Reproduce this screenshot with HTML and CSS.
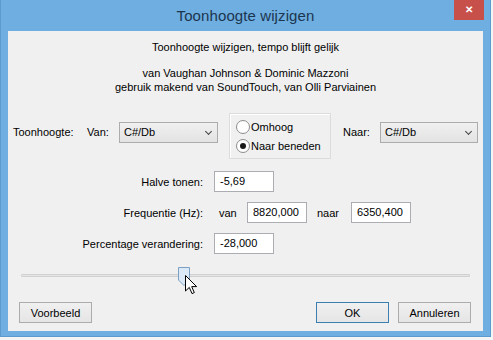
FILE: index.html
```html
<!DOCTYPE html>
<html>
<head>
    <title>Toonhoogte wijzigen</title>
    <link rel="stylesheet" href="styles.css">
</head>
<body>
    <div class="window">
        <div class="titlebar">
            <span></span>
            <span class="title">Toonhoogte wijzigen</span>
            <span class="close">&#x2715;</span>
        </div>

        <div class="client">
            <p class="intro">Toonhoogte wijzigen, tempo blijft gelijk</p>
            <p class="credits">van Vaughan Johnson &amp; Dominic Mazzoni<br>gebruik makend van SoundTouch, van Olli Parviainen</p>

            <div class="pitchrow">
                <span class="lab lab-pitch">Toonhoogte:</span>
                <span class="lab lab-van">Van:</span>
                <div class="dropdown">C#/Db<span class="chev"></span></div>
                <div class="radiobox">
                    <label class="radio"><span class="dot"></span>Omhoog</label>
                    <label class="radio"><span class="dot checked"></span>Naar beneden</label>
                </div>
                <span class="lab lab-naar">Naar:</span>
                <div class="dropdown dropdown-right">C#/Db<span class="chev"></span></div>
            </div>

            <div class="fields">
                <span class="flabel">Halve tonen:</span>
                <div class="fvalue"><div class="textbox">-5,69</div></div>

                <span class="flabel">Frequentie (Hz):</span>
                <div class="fvalue">
                    <span class="word word-van">van</span>
                    <div class="textbox">8820,000</div>
                    <span class="word word-naar">naar</span>
                    <div class="textbox">6350,400</div>
                </div>

                <span class="flabel">Percentage verandering:</span>
                <div class="fvalue"><div class="textbox">-28,000</div></div>
            </div>

            <div class="slider">
                <div class="track"></div>
                <div class="thumb">
                    <svg width="12" height="19" viewBox="0 0 12 19">
                        <path d="M0.5 0.5 H11.5 V13 L6 18.5 L0.5 13 Z" fill="#dbe9f6" stroke="#7c9fc4"/>
                    </svg>
                </div>
            </div>

            <div class="buttons">
                <button class="btn">Voorbeeld</button>
                <span class="spacer"></span>
                <button class="btn btn-default">OK</button>
                <button class="btn">Annuleren</button>
            </div>
        </div>

        <svg class="cursor" width="13" height="20" viewBox="0 0 13 20">
            <path d="M0.5 0.5 V16 L4.3 12.4 L7 18.6 L9.3 17.6 L6.7 11.6 L11.6 11.6 Z" fill="#ffffff" stroke="#000000" stroke-linejoin="round"/>
        </svg>
    </div>
</body>
</html>
```

FILE: styles.css
```css
body {
    margin: 0;
    padding: 0;
    background-color: #f4f4f4;
    font-family: "Liberation Sans", Arial, sans-serif;
    font-size: 11px;
    color: #000000;
}

.window {
    position: relative;
    width: 491px;
    height: 337px;
    background-color: #6eaee0;
    border: 1px solid #5c9bd0;
    border-top: none;
    box-sizing: border-box;
    display: flex;
    flex-direction: column;
    padding: 0 7px 5px 7px;
}

.titlebar {
    height: 31px;
    display: grid;
    grid-template-columns: 1fr auto 1fr;
    align-items: start;
}

.title {
    font-size: 15px;
    color: #1c3650;
    margin-top: 7px;
    letter-spacing: 0.1px;
}

.close {
    justify-self: end;
    width: 30px;
    height: 20px;
    margin-right: -1px;
    background-color: #c7504b;
    color: #ffffff;
    font-size: 10px;
    font-weight: bold;
    text-align: center;
    line-height: 20px;
}

.client {
    flex: 1;
    background-color: #f0f0f0;
    padding: 9px 0 0 0;
}

p {
    margin: 0;
    text-align: center;
    line-height: 14px;
}

.credits {
    margin-top: 12px;
}

.pitchrow {
    display: flex;
    align-items: flex-start;
    margin-top: 19px;
    padding-left: 5px;
}

.lab {
    margin-top: 9px;
    line-height: 21px;
}

.lab-pitch {
    width: 74px;
}

.lab-van {
    width: 32px;
}

.lab-naar {
    width: 37px;
    margin-left: 12px;
}

.dropdown {
    position: relative;
    margin-top: 9px;
    width: 99px;
    height: 21px;
    box-sizing: border-box;
    border: 1px solid #acacac;
    background: linear-gradient(#f0f0f0, #e3e3e3);
    line-height: 19px;
    padding-left: 4px;
}

.dropdown-right {
    width: 98px;
}

.chev {
    position: absolute;
    right: 6px;
    top: 6px;
    width: 4px;
    height: 4px;
    border-right: 1.5px solid #444444;
    border-bottom: 1.5px solid #444444;
    transform: rotate(45deg);
}

.radiobox {
    margin-left: 11px;
    width: 102px;
    height: 46px;
    box-sizing: border-box;
    border: 1px solid #dcdcdc;
    box-shadow: inset 1px 1px 0 #ffffff;
    padding: 6px 0 0 6px;
    display: flex;
    flex-direction: column;
    gap: 5px;
}

.radio {
    display: flex;
    align-items: center;
    line-height: 14px;
}

.dot {
    width: 12px;
    height: 12px;
    border: 1px solid #8c8c8c;
    border-radius: 50%;
    background-color: #ffffff;
    margin-right: 1px;
    display: flex;
    align-items: center;
    justify-content: center;
}

.dot.checked::after {
    content: "";
    width: 6px;
    height: 6px;
    border-radius: 50%;
    background-color: #1a1a1a;
}

.fields {
    display: grid;
    grid-template-columns: 195px auto;
    column-gap: 11px;
    row-gap: 10px;
    margin-top: 12px;
    align-items: center;
}

.flabel {
    text-align: right;
}

.fvalue {
    display: flex;
    align-items: center;
}

.textbox {
    width: 60px;
    height: 21px;
    box-sizing: border-box;
    border: 1px solid #acadb3;
    background-color: #ffffff;
    line-height: 19px;
    padding-left: 5px;
}

.word-van {
    margin-left: 5px;
    width: 28px;
}

.word-naar {
    margin-left: 10px;
    width: 34px;
}

.slider {
    position: relative;
    margin: 13px 13px 0 13px;
    height: 19px;
}

.track {
    position: absolute;
    left: 0;
    right: 0;
    top: 7px;
    height: 3px;
    background-color: #e6e6e6;
    border: 1px solid #d0d0d0;
    box-sizing: border-box;
    border-radius: 1px;
}

.thumb {
    position: absolute;
    left: 157px;
    top: 0;
    line-height: 0;
}

.buttons {
    display: flex;
    margin-top: 16px;
    padding: 0 12px 0 11px;
    gap: 9px;
}

.spacer {
    flex: 1;
}

.btn {
    width: 73px;
    height: 21px;
    border: 1px solid #acacac;
    background: linear-gradient(#f0f0f0, #e5e5e5);
    font-family: "Liberation Sans", Arial, sans-serif;
    font-size: 11px;
    color: #000000;
    padding: 0;
}

.btn-default {
    border-color: #3c7fb1;
}

.cursor {
    position: absolute;
    left: 184px;
    top: 275px;
}
```
